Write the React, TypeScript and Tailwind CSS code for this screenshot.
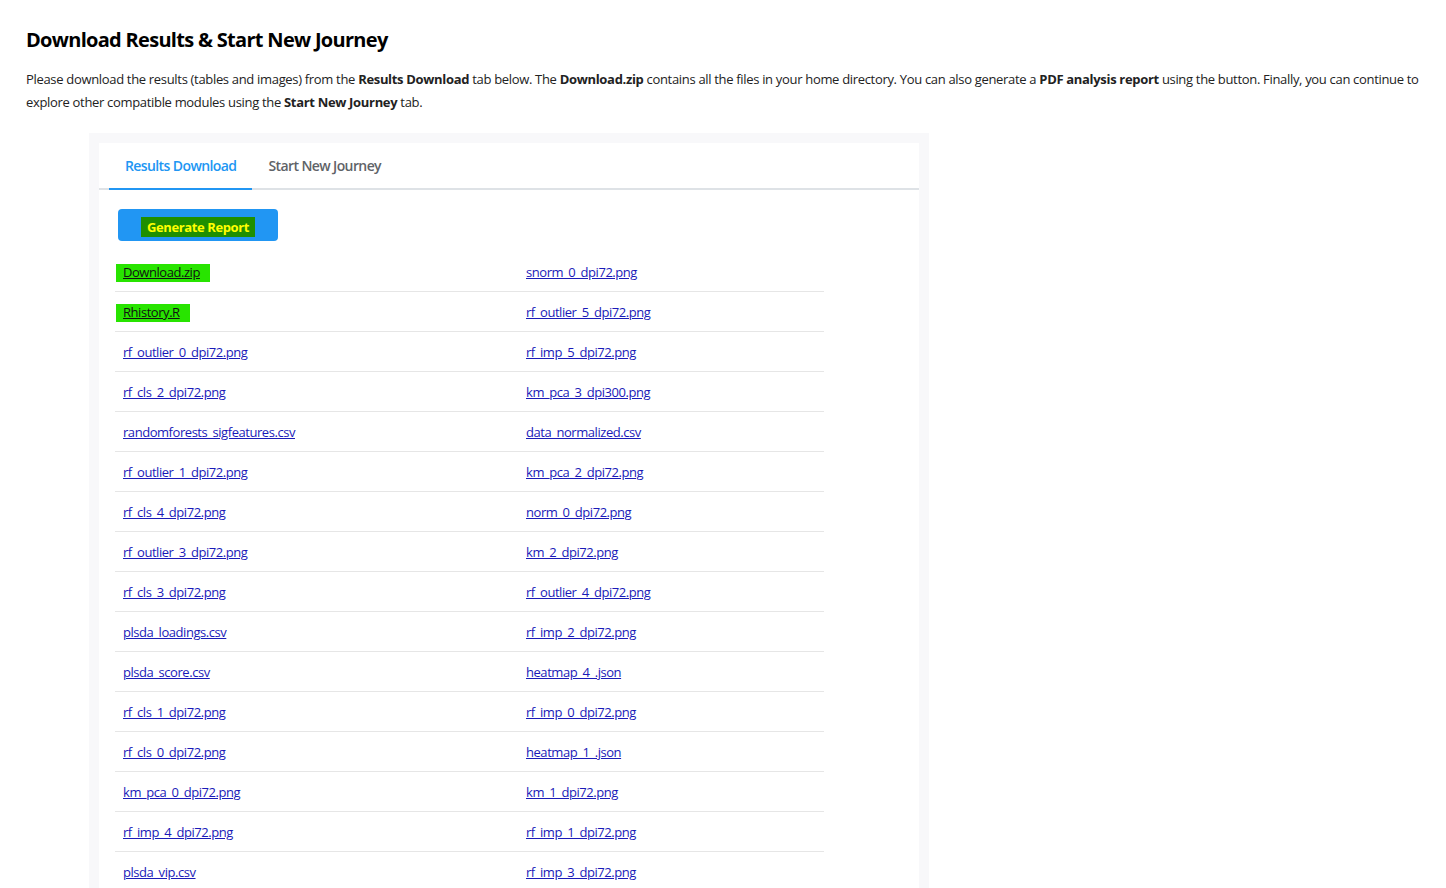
import React from "react";

const rows: [string, string][] = [
  ["Download.zip", "snorm_0_dpi72.png"],
  ["Rhistory.R", "rf_outlier_5_dpi72.png"],
  ["rf_outlier_0_dpi72.png", "rf_imp_5_dpi72.png"],
  ["rf_cls_2_dpi72.png", "km_pca_3_dpi300.png"],
  ["randomforests_sigfeatures.csv", "data_normalized.csv"],
  ["rf_outlier_1_dpi72.png", "km_pca_2_dpi72.png"],
  ["rf_cls_4_dpi72.png", "norm_0_dpi72.png"],
  ["rf_outlier_3_dpi72.png", "km_2_dpi72.png"],
  ["rf_cls_3_dpi72.png", "rf_outlier_4_dpi72.png"],
  ["plsda_loadings.csv", "rf_imp_2_dpi72.png"],
  ["plsda_score.csv", "heatmap_4_.json"],
  ["rf_cls_1_dpi72.png", "rf_imp_0_dpi72.png"],
  ["rf_cls_0_dpi72.png", "heatmap_1_.json"],
  ["km_pca_0_dpi72.png", "km_1_dpi72.png"],
  ["rf_imp_4_dpi72.png", "rf_imp_1_dpi72.png"],
  ["plsda_vip.csv", "rf_imp_3_dpi72.png"],
];

function Cell({ name, highlight }: { name: string; highlight?: boolean }) {
  if (highlight) {
    return (
      <span className="inline-flex h-[18px] items-center bg-[#28e400] -ml-[7px] pl-[7px] pr-[10px]">
        <a href="#" className="text-[#111] underline">
          {name}
        </a>
      </span>
    );
  }
  return (
    <a href="#" className="text-[#1a1ab8] underline">
      {name}
    </a>
  );
}

export default function App() {
  return (
    <div
      className="min-h-screen bg-white px-[26px] pt-[26px] text-[#222]"
      style={{ fontFamily: '"Open Sans", "Noto Sans", sans-serif' }}
    >
      <h1 className="text-[20px] font-bold leading-[28px] text-black tracking-[-0.7px]">
        Download Results &amp; Start New Journey
      </h1>
      <p className="mt-[14px] text-[13px] leading-[23px] text-[#222] tracking-[-0.32px]">
        Please download the results (tables and images) from the <b>Results Download</b> tab below. The{" "}
        <b>Download.zip</b> contains all the files in your home directory. You can also generate a{" "}
        <b>PDF analysis report</b> using the button. Finally, you can continue to explore other compatible modules
        using the <b>Start New Journey</b> tab.
      </p>

      <div className="ml-[63px] mt-[19px] w-[840px] bg-[#f8f8fa] p-[10px]">
        <div className="bg-white">
          <div className="flex border-b-2 border-[#dee2e6] pl-[10px]">
            <div className="-mb-[2px] border-b-2 border-[#2196f3] px-[16px] pt-[12px] pb-[12px] text-[14px] font-semibold leading-[21px] tracking-[-0.6px] text-[#2196f3]">
              Results Download
            </div>
            <div className="px-[16px] pt-[12px] pb-[12px] text-[14px] font-semibold leading-[21px] tracking-[-0.6px] text-[#5f6368]">
              Start New Journey
            </div>
          </div>

          <div className="pl-[16px] pt-[19px] pb-[20px]">
            <button className="ml-[3px] flex h-[32px] w-[160px] items-end justify-center rounded-[4px] bg-[#2196f3] pb-[4px]">
              <span className="bg-[#1f8f00] px-[6px] text-[13px] font-bold leading-[20px] tracking-[-0.4px] text-[#ffff00]">
                Generate Report
              </span>
            </button>

            <table className="mt-[10px] w-[709px] border-collapse text-[13px] tracking-[-0.45px]">
              <tbody>
                {rows.map(([a, b], i) => (
                  <tr key={i} className="h-[40px] border-b border-[#e6e6e6]">
                    <td className="w-[403px] pl-[8px] pt-[4px] align-middle">
                      <Cell name={a} highlight={i < 2} />
                    </td>
                    <td className="pl-[8px] pt-[4px] align-middle">
                      <Cell name={b} />
                    </td>
                  </tr>
                ))}
              </tbody>
            </table>
          </div>
        </div>
      </div>
    </div>
  );
}
